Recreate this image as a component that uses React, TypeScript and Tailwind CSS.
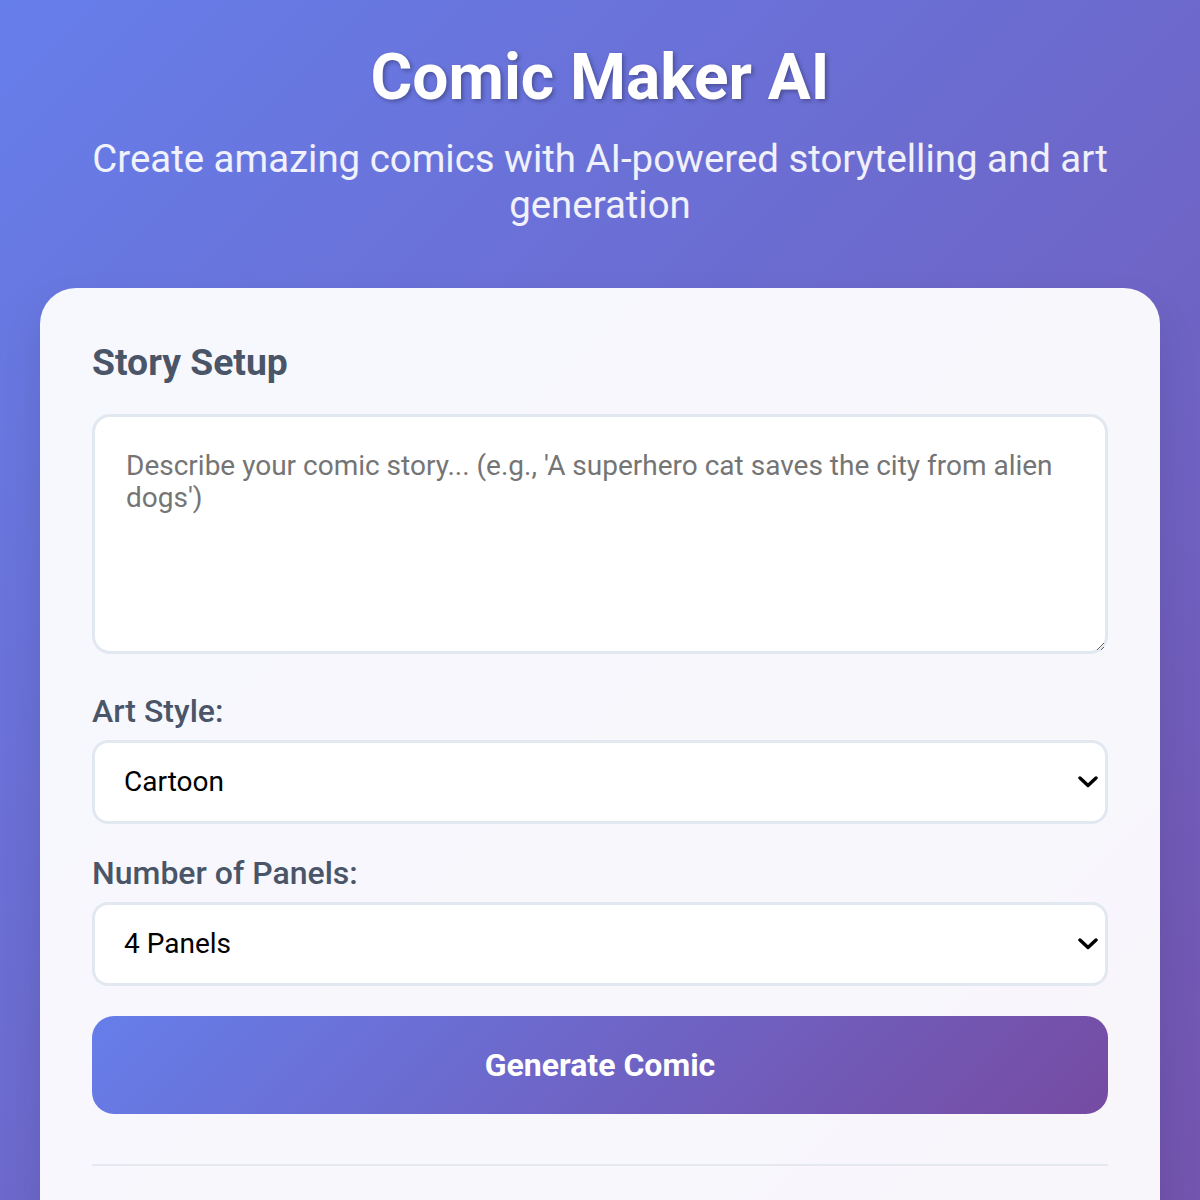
import React from "react";

function Chevron() {
  return (
    <svg
      className="pointer-events-none absolute right-[10px] top-1/2 -translate-y-1/2"
      width="20"
      height="12"
      viewBox="0 0 20 12"
      fill="none"
    >
      <path d="M2 2 L10 9.5 L18 2" stroke="#000" strokeWidth="3.4" strokeLinecap="round" strokeLinejoin="round" />
    </svg>
  );
}

export default function App() {
  return (
    <div
      className="min-h-[1700px] w-full bg-[linear-gradient(135deg,#667eea_0%,#764ba2_100%)] px-[40px] pt-[40px]"
      style={{ fontFamily: "Roboto, 'Noto Sans', sans-serif" }}
    >
      <h1 className="text-center text-[64px] font-bold leading-[76px] text-white [text-shadow:2px_2px_4px_rgba(0,0,0,0.3)]">
        Comic Maker AI
      </h1>
      <p className="mx-auto mt-[20px] max-w-[1120px] text-center text-[38.4px] leading-[46px] text-white/90">
        Create amazing comics with AI-powered storytelling and art generation
      </p>

      <div className="mt-[60px] rounded-[36px] bg-white/95 px-[52px] pb-[80px] pt-[52px] shadow-[0_20px_40px_rgba(0,0,0,0.1)]">
        <h2 className="text-[37.3px] font-bold leading-[44px] text-[#4a5568]">Story Setup</h2>

        <textarea
          className="mt-[30px] block h-[240px] w-full resize-y rounded-[18px] border-[3px] border-[#e2e8f0] bg-white px-[31px] pb-[31px] pt-[33px] text-[28px] leading-[32px] text-[#333] outline-none placeholder:text-[#757575]"
          placeholder="Describe your comic story... (e.g., 'A superhero cat saves the city from alien dogs')"
        />

        <label className="mt-[39px] block text-[32px] font-medium leading-[36px] text-[#4a5568]">Art Style:</label>
        <div className="relative mt-[11px]">
          <select
            defaultValue="cartoon"
            className="block h-[84px] w-full appearance-none rounded-[16px] border-[3px] border-[#e2e8f0] bg-white pl-[29px] text-[28px] text-black outline-none"
          >
            <option value="cartoon">Cartoon</option>
            <option value="manga">Manga</option>
            <option value="realistic">Realistic</option>
          </select>
          <Chevron />
        </div>

        <label className="mt-[31px] block text-[32px] font-medium leading-[36px] text-[#4a5568]">Number of Panels:</label>
        <div className="relative mt-[11px]">
          <select
            defaultValue="4"
            className="block h-[84px] w-full appearance-none rounded-[16px] border-[3px] border-[#e2e8f0] bg-white pl-[29px] text-[28px] text-black outline-none"
          >
            <option value="2">2 Panels</option>
            <option value="4">4 Panels</option>
            <option value="6">6 Panels</option>
          </select>
          <Chevron />
        </div>

        <button className="mt-[30px] block h-[98px] w-full rounded-[22px] bg-[linear-gradient(135deg,#667eea_0%,#764ba2_100%)] text-[32px] font-bold text-white">
          Generate Comic
        </button>

        <div className="mt-[50px] h-[2px] w-full bg-[#e6e8ef]" />
      </div>
    </div>
  );
}
